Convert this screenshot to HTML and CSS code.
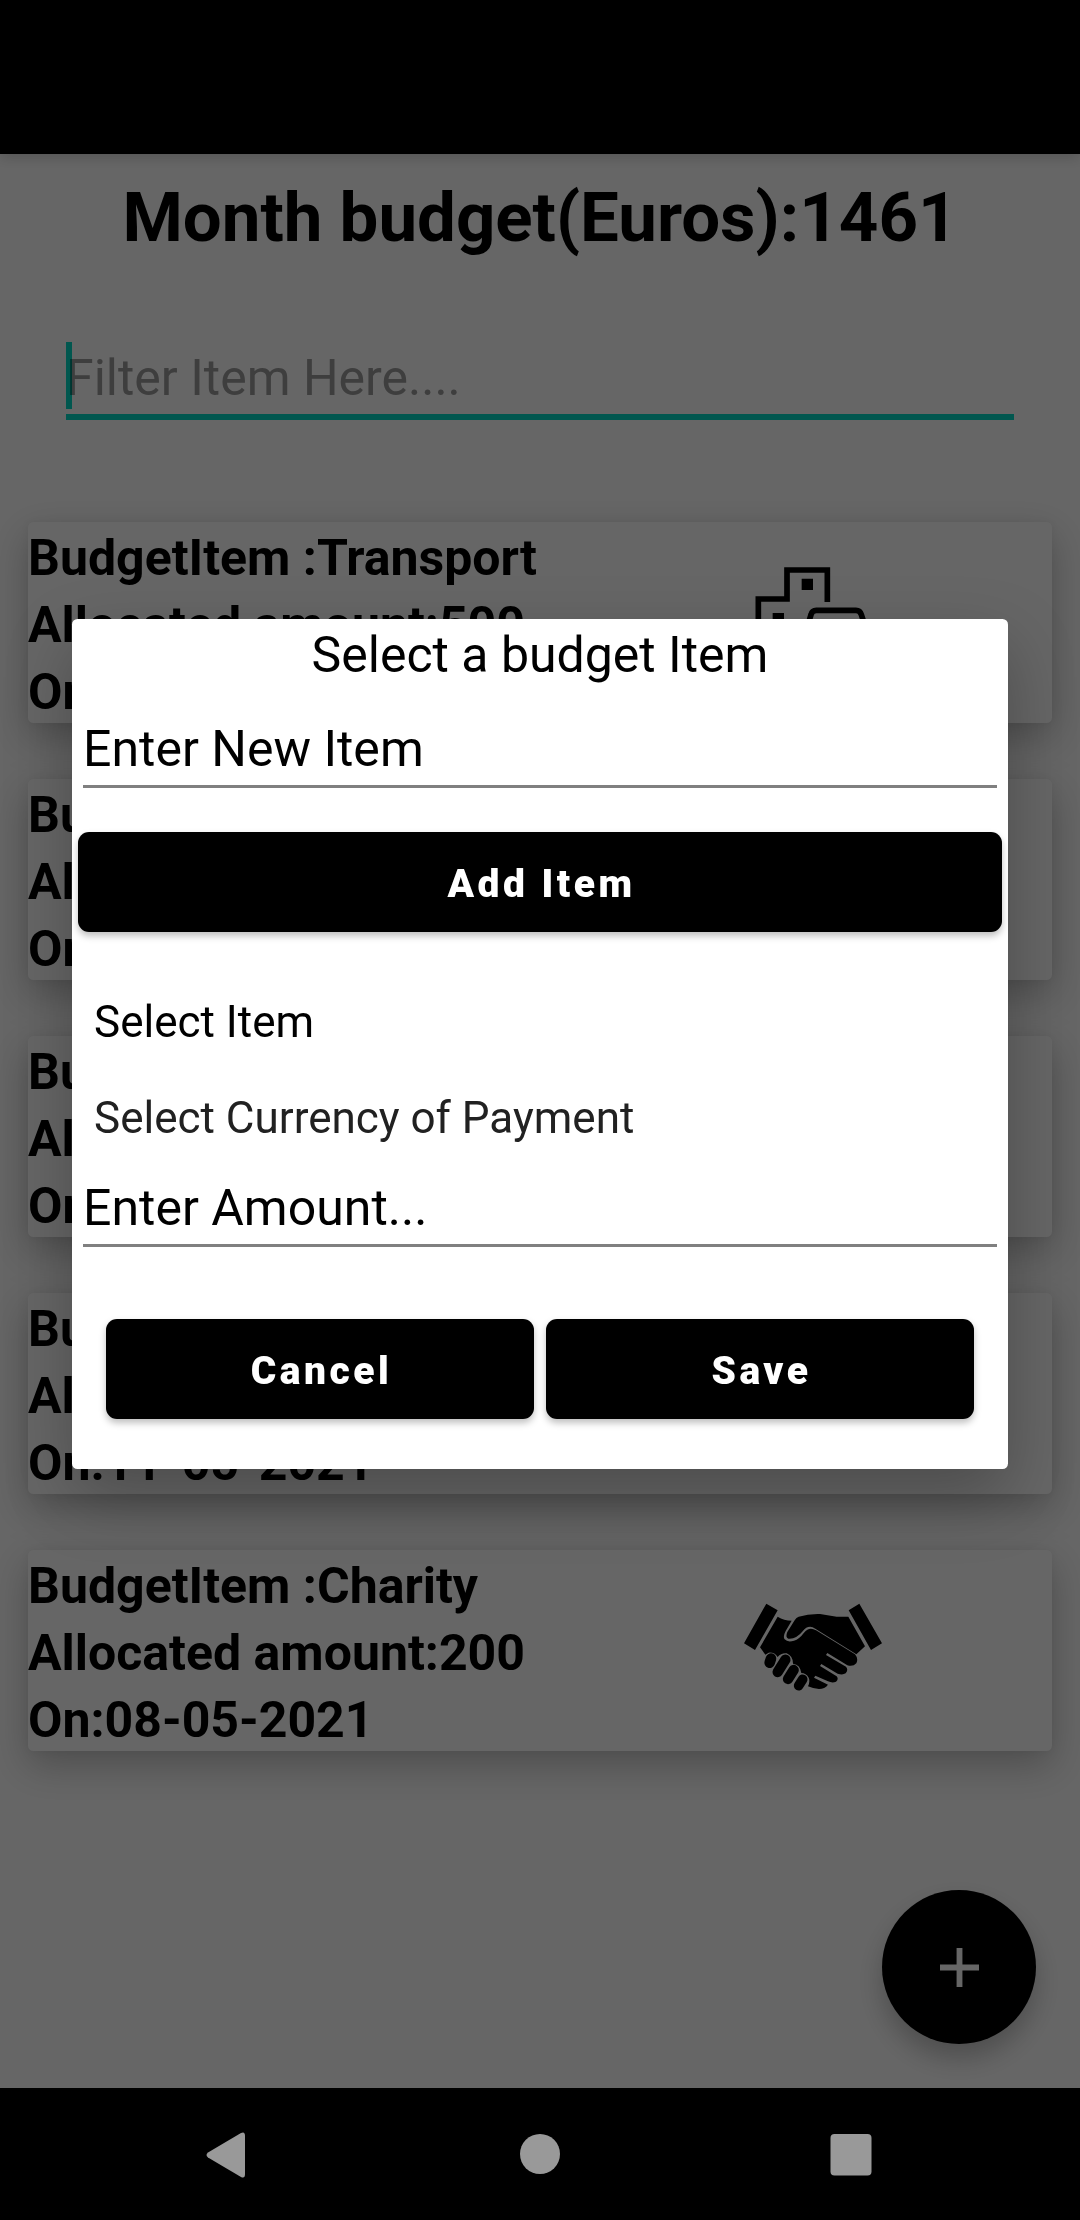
FILE: index.html
```html
<!DOCTYPE html>
<html lang="en">
<head>
<meta charset="utf-8">
<title>Month budget</title>
<link rel="stylesheet" href="styles.css">
</head>
<body>
<div class="screen">
  <header class="appbar"></header>
  <main class="page">
    <h1 class="total">Month budget(Euros):1461</h1>
    <div class="filter"><span class="caret"></span>Filter Item Here....</div>
    <section class="list">
      <article class="card">
        <div class="info"><p>BudgetItem :Transport</p><p>Allocated amount:500</p><p>On:11-05-2021</p></div>
        <svg class="icon" viewBox="0 0 540 390">
          <g fill="none" stroke="#000" stroke-width="17">
            <path d="M322 150V54H201V141H115V330H240"/>
            <path d="M262 225L273 188Q276 175 289 175H408Q420 175 424 188L436 225V330H262Z"/>
          </g>
          <path d="M245 80h34v34h-34zM158 183h34v34h-34z"/>
        </svg>
      </article>
      <article class="card"><div class="info"><p>BudgetItem :Food</p><p>Allocated amount:200</p><p>On:11-05-2021</p></div></article>
      <article class="card"><div class="info"><p>BudgetItem :House</p><p>Allocated amount:300</p><p>On:11-05-2021</p></div></article>
      <article class="card"><div class="info"><p>BudgetItem :Health</p><p>Allocated amount:261</p><p>On:11-05-2021</p></div></article>
      <article class="card">
        <div class="info"><p>BudgetItem :Charity</p><p>Allocated amount:200</p><p>On:08-05-2021</p></div>
        <svg class="icon" viewBox="0 0 540 390">
          <path d="M139 71L173 91L105 210L72 190ZM418 71L486 190L453 210L386 91Z"/>
          <path d="M173 110Q192 122 215 122L197 153Q188 170 194 178Q203 188 222 182Q238 177 252 158Q268 138 288 151L405 223Q416 236 409 250Q399 261 382 256L322 219L318 225L378 260Q386 270 377 280Q368 286 353 281L304 252L300 258L350 289Q357 298 348 305Q337 310 324 304L286 287L282 293L324 314Q314 327 297 327Q278 326 264 319Q271 304 266 293Q258 279 244 279Q241 254 219 251Q219 228 200 220Q184 218 173 231Q163 216 146 218L136 224L120 202Z"/>
          <path d="M236 110Q265 101 300 102L350 110H385L435 199L409 223L286 146Q265 132 248 154Q229 178 205 176Q195 172 202 156L224 121Q229 112 236 110Z"/>
          <g fill="none" stroke="#000" stroke-linecap="round">
            <path stroke-width="32" d="M153 236L149 248"/>
            <path stroke-width="31" d="M196 239L173 276"/>
            <path stroke-width="31" d="M221 270L204 297"/>
            <path stroke-width="29" d="M248 298L236 317"/>
          </g>
        </svg>
      </article>
    </section>
    <div class="fab"><svg viewBox="0 0 40 40"><path d="M17 0h6v17h17v6H23v17h-6V23H0v-6h17z"/></svg></div>
  </main>
  <div class="scrim"></div>
  <form class="dialog">
    <h2 class="heading">Select a budget Item</h2>
    <div class="field">Enter New Item</div>
    <div class="button add">Add Item</div>
    <div class="choice item">Select Item</div>
    <div class="choice currency">Select Currency of Payment</div>
    <div class="field amount">Enter Amount...</div>
    <div class="actions"><div class="button">Cancel</div><div class="button">Save</div></div>
  </form>
  <nav class="navbar">
    <svg viewBox="0 0 46 46"><path d="M2 20.500Q-1 23 2 25.500L35 45Q39 47 39 42V4Q39 -1 35 1Z"/></svg>
    <svg viewBox="0 0 46 46"><circle cx="23" cy="22" r="20"/></svg>
    <svg viewBox="0 0 46 46"><rect x="2.500" y="2" width="41" height="41.500" rx="4"/></svg>
  </nav>
</div>
</body>
</html>
```
FILE: styles.css
```css
* { box-sizing: border-box; }
body { margin: 0; font-family: Roboto, sans-serif; color: #000; }
h1, h2, p { margin: 0; }
.screen { position: relative; width: 1080px; height: 2220px; display: flex; flex-direction: column; overflow: hidden; background: #fff; }
.appbar { height: 154px; background: #000; box-shadow: 0 4px 12px rgba(0, 0, 0, .16); }
.page { position: relative; flex: 1; display: flex; flex-direction: column; }
.total { padding-top: 24px; height: 188px; text-align: center; font-size: 69px; line-height: 80px; font-weight: 700; white-space: nowrap; }
.filter { position: relative; margin: 0 66px; height: 78px; border-bottom: 6px solid #03dac5; color: #9c9c9c; font-size: 50px; line-height: 72px; white-space: nowrap; }
.caret { position: absolute; left: 0; top: 0; width: 6px; height: 67px; background: #03dac5; mix-blend-mode: multiply; }
.list { margin: 102px 28px 0; display: flex; flex-direction: column; gap: 56px; }
.card { height: 201px; display: flex; border-radius: 5.500px; background: #fff; box-shadow: 0 14px 38px rgba(0, 0, 0, .25), 0 0 10px rgba(0, 0, 0, .05); }
.info { width: 692px; padding-top: 3px; font-size: 50px; font-weight: 700; line-height: 67px; white-space: nowrap; }
.icon { width: 180px; height: 130px; margin-top: 30px; }
.fab { position: absolute; left: 882px; top: 1736px; width: 154px; height: 154px; border-radius: 50%; background: #000; display: grid; place-items: center; box-shadow: 0 14px 26px rgba(0, 0, 0, .24); }
.fab svg { width: 39px; height: 39px; fill: #fff; }
.scrim { position: absolute; inset: 0; background: rgba(0, 0, 0, .6); }
.dialog { position: absolute; left: 72px; top: 619px; width: 936px; height: 850px; display: flex; flex-direction: column; border-radius: 5.500px; background: #fff; box-shadow: 0 26px 66px rgba(0, 0, 0, .26); white-space: nowrap; }
.heading { height: 85px; padding-top: 3px; text-align: center; font-size: 50px; font-weight: 400; line-height: 67px; }
.field { height: 84px; margin: 0 11px; padding-top: 12px; font-size: 50px; line-height: 67px; border-bottom: 3px solid #808080; }
.button { flex: 1; height: 100px; padding-left: 3px; border-radius: 11px; background: #000; color: #fff; text-align: center; font-size: 39px; font-weight: 900; letter-spacing: 3.480px; line-height: 104px; box-shadow: 0 4px 7px rgba(0, 0, 0, .25); }
.button.add { flex: none; margin: 44px 6px 0; }
.choice { height: 96px; padding-left: 22px; font-size: 44px; line-height: 60px; }
.choice.item { margin-top: 60px; }
.choice.currency { height: 69px; color: #212121; }
.field.amount { height: 90px; padding-top: 18px; }
.actions { display: flex; gap: 12px; margin: 72px 34px 0; }
.navbar { position: relative; height: 132px; background: #000; display: flex; padding: 44px 206px 0; justify-content: space-between; }
.navbar svg { width: 46px; height: 46px; fill: #999; }
```
